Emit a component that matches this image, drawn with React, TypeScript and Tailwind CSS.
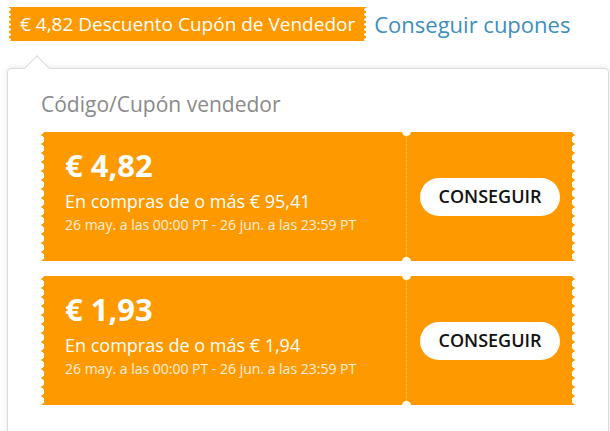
const coupons = [
  {
    id: 1,
    amount: "€ 4,82",
    min: "En compras de o más € 95,41",
    dates: "26 may. a las 00:00 PT - 26 jun. a las 23:59 PT",
  },
  {
    id: 2,
    amount: "€ 1,93",
    min: "En compras de o más € 1,94",
    dates: "26 may. a las 00:00 PT - 26 jun. a las 23:59 PT",
  },
];

function Coupon({ amount, min, dates }: { amount: string; min: string; dates: string }) {
  return (
    <div className="flex h-[129px] w-[536px] bg-[#ff9900] text-white">
      {/* scalloped left edge */}
      <div className="w-[5px] shrink-0 bg-[radial-gradient(circle_at_0_50%,#fff_4px,#ff9900_4.5px)] bg-[length:5px_9px] bg-[position:0_3px]" />

      <div className="flex-1 pl-[20px] pt-[15px]">
        <p className="text-[31px] font-bold leading-[36px]">{amount}</p>
        <p className="mt-[6px] text-[18px] leading-[24px]">{min}</p>
        <p className="mt-[3px] text-[14px] leading-[18px] text-white/85">{dates}</p>
      </div>

      <div className="relative flex w-[165px] items-center justify-center border-l border-dotted border-white/40 pl-[2px]">
        <div className="absolute left-[-5px] top-[-5px] h-[9px] w-[9px] rounded-full bg-white" />
        <div className="absolute left-[-5px] bottom-[-5px] h-[9px] w-[9px] rounded-full bg-white" />
        <button className="h-[38px] w-[140px] rounded-full bg-white text-[18px] font-semibold text-[#111]">
          CONSEGUIR
        </button>
      </div>

      {/* scalloped right edge */}
      <div className="w-[5px] shrink-0 bg-[radial-gradient(circle_at_100%_50%,#fff_4px,#ff9900_4.5px)] bg-[length:5px_9px] bg-[position:0_3px]" />
    </div>
  );
}

export default function App() {
  return (
    <div className="h-[431px] w-[610px] overflow-hidden bg-white font-['Open_Sans',sans-serif]">
      {/* Header */}
      <div className="flex items-center gap-[8px] pl-[9px] pt-[7px]">
        <div className="flex h-[34px] items-stretch bg-[#ff9900] text-[19px] text-white">
          <div className="w-[2px] bg-[radial-gradient(circle_at_0_50%,#fff_1.5px,#ff9900_2px)] bg-[length:2px_5px]" />
          <span className="flex items-center px-[9px]">€ 4,82 Descuento Cupón de Vendedor</span>
          <div className="w-[2px] bg-[radial-gradient(circle_at_100%_50%,#fff_1.5px,#ff9900_2px)] bg-[length:2px_5px]" />
        </div>
        <span className="text-[22px] text-[#3d8fbb]">Conseguir cupones</span>
      </div>

      {/* Popover */}
      <div className="relative ml-[7px] mt-[27px] h-[400px] w-[602px] rounded-[4px] border border-[#dcdcdc] bg-white shadow-[0_0_6px_rgba(0,0,0,0.1)]">
        <div className="absolute left-[20px] top-[-10px] h-[18px] w-[18px] rotate-45 border-l border-t border-[#dcdcdc] bg-white" />
        <div className="relative px-[32px] pt-[22px]">
          <p className="pl-[1px] text-[21px] leading-[27px] text-[#8a8a8a]">Código/Cupón vendedor</p>
          <div className="mt-[14px] flex flex-col gap-[15px]">
            {coupons.map((c) => (
              <Coupon key={c.id} amount={c.amount} min={c.min} dates={c.dates} />
            ))}
          </div>
        </div>
      </div>
    </div>
  );
}
